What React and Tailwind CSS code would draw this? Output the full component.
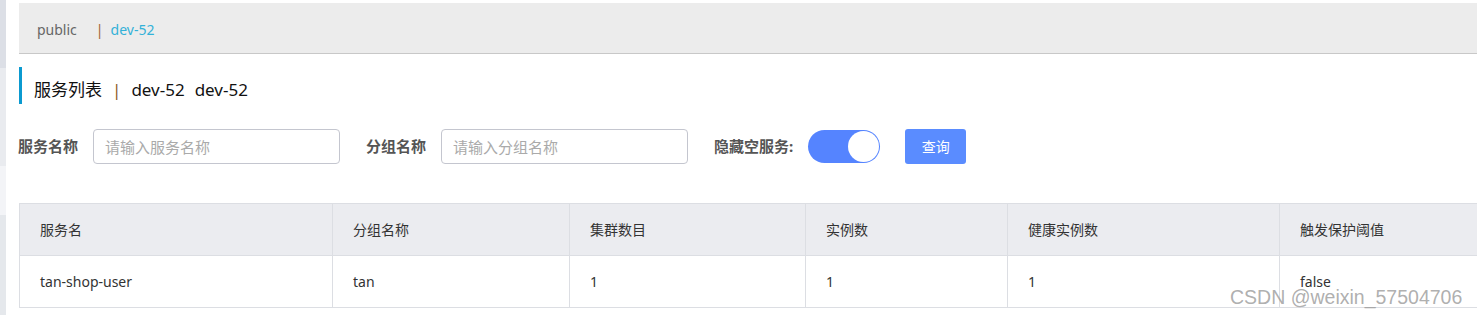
import React, { useState } from "react";

const columns = [
  { title: "服务名", width: "w-[313px]" },
  { title: "分组名称", width: "w-[237px]" },
  { title: "集群数目", width: "w-[236px]" },
  { title: "实例数", width: "w-[202px]" },
  { title: "健康实例数", width: "w-[272px]" },
  { title: "触发保护阈值", width: "w-[260px]" },
];

const rows = [["tan-shop-user", "tan", "1", "1", "1", "false"]];

const font = {
  fontFamily: '"Noto Sans", "Noto Sans CJK SC", sans-serif',
};

const Switch = ({ checked, onChange }) => (
  <button
    onClick={() => onChange(!checked)}
    className={`relative h-[33px] w-[72px] rounded-full ${
      checked ? "bg-[#5584ff]" : "bg-[#dcdfe6]"
    }`}
  >
    <span
      className={`absolute top-[1px] h-[31px] w-[31px] rounded-full bg-white ${
        checked ? "right-[1px]" : "left-[1px]"
      }`}
    />
  </button>
);

const App = () => {
  const [hideEmpty, setHideEmpty] = useState(true);

  return (
    <div className="relative flex h-[315px] w-[1477px] overflow-hidden bg-white" style={font}>
      {/* left rail */}
      <div className="flex w-[6px] shrink-0 flex-col">
        <div className="h-[68px] bg-[#dcdfe6]" />
        <div className="h-[98px] bg-[#e9ebef]" />
        <div className="h-[49px] bg-[#f3f4f7]" />
        <div className="flex-1 bg-[#e5e8ec]" />
      </div>

      <div className="ml-[13px] flex min-w-0 flex-1 flex-col">
        {/* namespace bar */}
        <div className="mt-[3px] flex h-[51px] shrink-0 items-center border-b border-[#c8c8c8] bg-[#ececec] pl-[18px] pt-[3px] text-[14px]">
          <span className="text-[#666]">public</span>
          <span className="ml-[19px] text-[#a0622d]">|</span>
          <span className="ml-[7px] text-[#33b1d8]">dev-52</span>
        </div>

        {/* title */}
        <div className="mt-[13px] flex h-[37px] shrink-0 items-center border-l-[3px] border-[#0b9ad0] pl-[12px] pt-[8px] text-[17px] text-[#111]">
          <span>服务列表</span>
          <span className="mx-[10px] text-[#8b5a2b]">|</span>
          <span>dev-52</span>
          <span className="ml-[10px]">dev-52</span>
        </div>

        {/* search form */}
        <div className="ml-[-1px] mt-[25px] flex h-[35px] shrink-0 items-center text-[15px]">
          <label className="font-bold text-[#555]">服务名称</label>
          <input
            placeholder="请输入服务名称"
            className="ml-[15px] h-[35px] w-[247px] rounded-[4px] border border-[#c4c6cf] px-[11px] text-[15px] text-[#333] placeholder:text-[#aaa] outline-none"
          />
          <label className="ml-[26px] font-bold text-[#555]">分组名称</label>
          <input
            placeholder="请输入分组名称"
            className="ml-[15px] h-[35px] w-[247px] rounded-[4px] border border-[#c4c6cf] px-[11px] text-[15px] text-[#333] placeholder:text-[#aaa] outline-none"
          />
          <label className="ml-[26px] font-bold text-[#555]">隐藏空服务:</label>
          <div className="ml-[15px] flex">
            <Switch checked={hideEmpty} onChange={setHideEmpty} />
          </div>
          <button className="ml-[25px] h-[35px] w-[61px] rounded-[3px] bg-[#5a8cff] text-[14px] text-white">
            查询
          </button>
        </div>

        {/* table */}
        <div className="mt-[39px] shrink-0">
          <table className="w-[1520px] table-fixed border-collapse text-[14px] text-[#333]">
            <thead>
              <tr className="h-[52px] bg-[#ebecf0]">
                {columns.map((col) => (
                  <th
                    key={col.title}
                    className={`${col.width} border border-[#dcdee3] px-[20px] text-left font-normal`}
                  >
                    {col.title}
                  </th>
                ))}
              </tr>
            </thead>
            <tbody>
              {rows.map((row, i) => (
                <tr key={i} className="h-[52px]">
                  {row.map((cell, j) => (
                    <td key={j} className="border border-[#dcdee3] px-[20px]">
                      {cell}
                    </td>
                  ))}
                </tr>
              ))}
            </tbody>
          </table>
        </div>
      </div>

      {/* watermark */}
      <div
        className="absolute left-[1230px] top-[283px] text-[19.5px] text-[#9a9a9a]/80"
        style={{ fontFamily: '"Liberation Sans", Arial, sans-serif' }}
      >
        CSDN @weixin_57504706
      </div>
    </div>
  );
};

export default App;
